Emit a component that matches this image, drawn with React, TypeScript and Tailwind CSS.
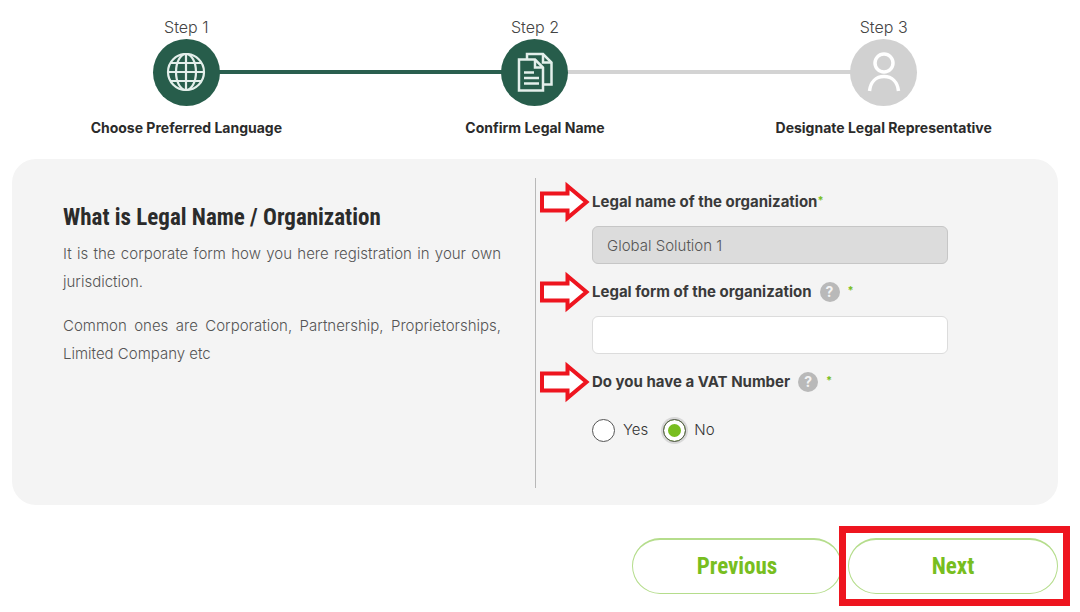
import { useState, type ReactNode } from 'react'

interface Step {
  title: string
  label: string
  done:  boolean
  icon:  ReactNode
}

const STEPS: Step[] = [
  { title: 'Step 1', label: 'Choose Preferred Language',      done: true,  icon: <GlobeIcon /> },
  { title: 'Step 2', label: 'Confirm Legal Name',             done: true,  icon: <DocsIcon /> },
  { title: 'Step 3', label: 'Designate Legal Representative', done: false, icon: <PersonIcon /> },
]

export default function App() {
  const [form, setForm] = useState('')
  const [vat, setVat]   = useState('no')

  return (
    <main className="bg-white pt-[15px] pr-[22px] pb-[18px] pl-3 font-[Inter,'Liberation_Sans',sans-serif] text-[#3a3a3a]">

      {/* ── Stepper ── */}
      <ol className="grid grid-cols-3">
        {STEPS.map((step, i) => (
          <li key={step.title} className="relative flex flex-col items-center">
            {i > 0 && (
              <span
                className={`absolute top-[55px] right-1/2 h-1 w-full ${step.done ? 'bg-[#2a5f4f]' : 'bg-[#d3d3d3]'}`}
              />
            )}
            <span className="text-base leading-6 font-light text-[#444]">{step.title}</span>
            <span
              className={`z-10 flex size-[67px] items-center justify-center rounded-full ${step.done ? 'bg-[#275d4b]' : 'bg-[#d1d1d1]'}`}
            >
              {step.icon}
            </span>
            <span className="mt-3 text-sm leading-5 font-bold text-[#2b2b2b]">{step.label}</span>
          </li>
        ))}
      </ol>

      {/* ── Panel ── */}
      <section className="mt-[21px] grid grid-cols-2 rounded-3xl bg-[#f4f4f4] pt-[19px] pb-[17px]">
        <div className="pt-[26px] pr-[34px] pl-[51px]">
          <h1 className="font-['Roboto_Condensed','Open_Sans_Condensed',Roboto,sans-serif] text-[23px] leading-7 font-bold text-[#2b2b2b]">
            What is Legal Name / Organization
          </h1>
          <p className="mt-2 text-justify text-[15px] leading-7 font-light text-[#555]">
            It is the corporate form how you here registration in your own jurisdiction.
          </p>
          <p className="mt-4 text-justify text-[15px] leading-7 font-light text-[#555]">
            Common ones are Corporation, Partnership, Proprietorships, Limited Company etc
          </p>
        </div>

        <form className="border-l border-[#b8b8b8] pt-3 pr-[110px] pb-[46px] pl-[56px]">
          <div className="relative flex h-6 items-center">
            <Arrow />
            <label htmlFor="name" className="text-[15px] font-bold">Legal name of the organization</label>
            <Required />
          </div>
          <input
            id="name"
            value="Global Solution 1"
            disabled
            className="mt-3 h-[38px] w-full rounded-md border border-[#c6c6c6] bg-[#dcdcdc] px-[14px] text-[15px] font-light text-[#555]"
          />

          <div className="relative mt-4 flex h-6 items-center">
            <Arrow />
            <label htmlFor="form" className="text-[15px] font-bold">Legal form of the organization</label>
            <Help />
            <Required />
          </div>
          <input
            id="form"
            value={form}
            onChange={e => setForm(e.target.value)}
            className="mt-3 h-[38px] w-full rounded-md border border-[#dcdcdc] bg-white px-[14px] text-[15px] font-light"
          />

          <fieldset className="mt-4">
            <legend className="relative flex h-6 items-center text-[15px] font-bold">
              <Arrow />
              Do you have a VAT Number
              <Help />
              <Required />
            </legend>
            <div className="mt-6 flex h-6 items-center gap-[15px] text-[15px] font-light text-[#333]">
              <Radio label="Yes" checked={vat === 'yes'} onChange={() => setVat('yes')} />
              <Radio label="No"  checked={vat === 'no'}  onChange={() => setVat('no')} />
            </div>
          </fieldset>
        </form>
      </section>

      {/* ── Actions ── */}
      <div className="mt-[33px] flex justify-end gap-[6px]">
        <NavButton>Previous</NavButton>
        <div className="relative">
          <NavButton>Next</NavButton>
          <span className="pointer-events-none absolute -inset-y-3 -right-3 -left-[9px] border-[7px] border-[#ee151f]" />
        </div>
      </div>
    </main>
  )
}

function NavButton({ children }: { children: ReactNode }) {
  return (
    <button
      type="button"
      className="h-14 w-[210px] rounded-full border border-t-2 border-[#b5dd8c] bg-white font-['Roboto_Condensed','Open_Sans_Condensed',Roboto,sans-serif] text-[23px] leading-7 font-bold text-[#78be20]"
    >
      {children}
    </button>
  )
}

function Radio({ label, checked, onChange }: { label: string; checked: boolean; onChange: () => void }) {
  return (
    <label className="flex items-center gap-2">
      <input
        type="radio"
        name="vat"
        checked={checked}
        onChange={onChange}
        className="size-[23px] appearance-none rounded-full border border-[#555] bg-white checked:bg-[#78be20] checked:shadow-[inset_0_0_0_4px_white,0_0_0_2px_#d8d8d8]"
      />
      {label}
    </label>
  )
}

function Required() {
  return <span className="self-start text-[11px] leading-5 font-bold text-[#78be20]">*</span>
}

function Help() {
  return (
    <button
      type="button"
      aria-label="Help"
      className="mr-2 ml-2 flex size-5 items-center justify-center rounded-full bg-[#b9b9b9] text-sm font-bold text-[#f4f4f4]"
    >
      ?
    </button>
  )
}

function Arrow() {
  return (
    <svg className="absolute -left-[52px] h-[42px] w-[50px]" viewBox="0 0 50 42" fill="#fff" stroke="#ee151f" strokeWidth="4">
      <path d="M2 12.500H27.500V5L46.500 21L27.500 37V29.500H2Z" />
    </svg>
  )
}

function GlobeIcon() {
  return (
    <svg className="size-10" viewBox="0 0 40 40" fill="none" stroke="#e4efeb" strokeWidth="2.200">
      <circle cx="20" cy="19" r="18" />
      <ellipse cx="20" cy="19" rx="10" ry="18" />
      <path d="M20 1V37M2 19H38M5 10H35M5 28H35" />
    </svg>
  )
}

function DocsIcon() {
  return (
    <svg className="size-10 overflow-visible" viewBox="0 0 40 40" fill="none" stroke="#e4efeb" strokeWidth="2.500">
      <path d="M4 6.500H20L28 14.500V37.500H4Z" />
      <path d="M20 6.500V14.500H28" />
      <path d="M12 6V1H28L36.500 9.500V31.500H28" />
      <path d="M28 1V9.500H36.500" />
      <path d="M9 19.500H19M9 25H24M9 30.500H24" />
    </svg>
  )
}

function PersonIcon() {
  return (
    <svg className="size-10 overflow-visible" viewBox="0 0 40 40" fill="none" stroke="#fff" strokeWidth="3.500">
      <circle cx="20" cy="10" r="9" />
      <path d="M5.500 38C6.500 29 12 23.500 20 23.500S33.500 29 34.500 38" />
    </svg>
  )
}
